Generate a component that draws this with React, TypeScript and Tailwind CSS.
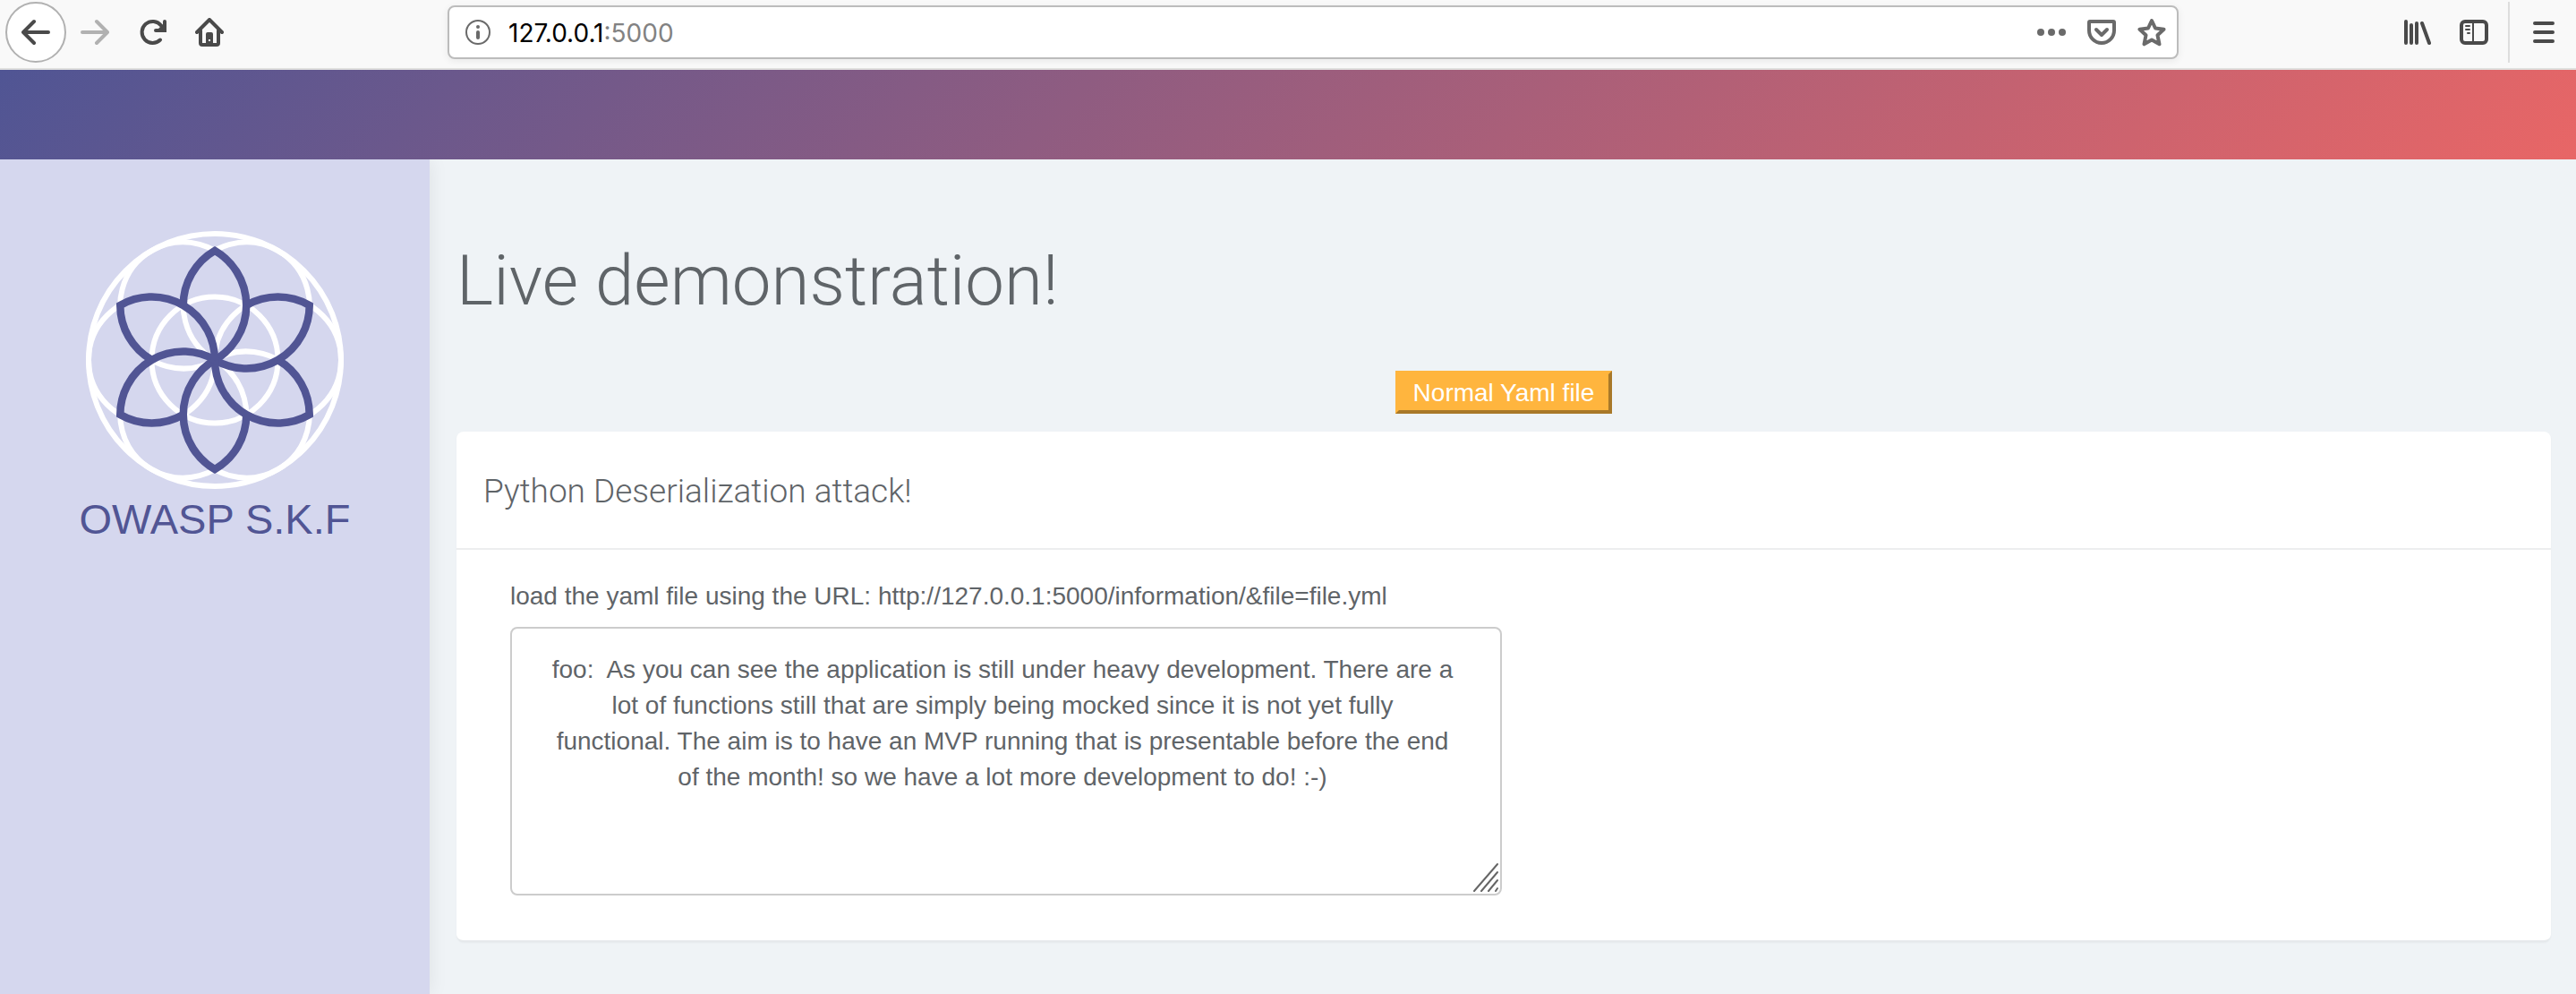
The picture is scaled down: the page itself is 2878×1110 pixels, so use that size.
import React from "react";

const PETAL_ANGLES = [0, 60, 120, 180, 240, 300];

const YAML_TEXT = [
  "foo:  As you can see the application is still under heavy development. There are a lot of functions still that are simply being mocked since it is not yet fully",
  "functional. The aim is to have an MVP running that is presentable before the end",
  "of the month! so we have a lot more development to do! :-)",
].join("\n");

function Icon({ children, className = "" }: { children: React.ReactNode; className?: string }) {
  return (
    <svg
      viewBox="0 0 32 32"
      className={`block size-8 shrink-0 ${className}`}
      fill="none"
      stroke="currentColor"
      strokeWidth="4"
      strokeLinecap="round"
      strokeLinejoin="round"
      aria-hidden="true"
    >
      {children}
    </svg>
  );
}

function BrowserBar() {
  return (
    <div className="flex h-[78px] items-start border-b-2 border-[#e0e0de] bg-[#f9f9f9] pt-[2px] pr-5 pl-[6px] text-[#4a4a4a]">
      <div className="flex h-[68px] items-center">
        <button aria-label="Back" className="flex size-[68px] items-center justify-center rounded-full border-2 border-[#b1b1b1] bg-white">
          <Icon>
            <path d="M30 16H3M14 4L2 16l12 12" />
          </Icon>
        </button>
        <button aria-label="Forward" className="ml-4 text-[#b1b1b1]">
          <Icon>
            <path d="M2 16h27M18 4l12 12-12 12" />
          </Icon>
        </button>
        <button aria-label="Reload" className="ml-8">
          <Icon>
            <path d="M25 24.500a12 12 0 1 1 1-16" />
            <path d="M30 4v10h-10" strokeLinejoin="miter" />
            <path d="M29 6v7h-7z" fill="currentColor" stroke="none" />
          </Icon>
        </button>
        <button aria-label="Home" className="ml-8">
          <Icon>
            <path d="M2 16L16 2l14 14" />
            <path d="M6 14v14a2 2 0 0 0 2 2h16a2 2 0 0 0 2-2V14" />
            <path d="M12 30V18a2 2 0 0 1 2-2h4a2 2 0 0 1 2 2v12h-3v-6h-2v6z" fill="currentColor" stroke="none" />
            <path d="M13 28h6" strokeWidth="4" strokeLinecap="butt" />
          </Icon>
        </button>
      </div>

      <div className="mt-1 ml-[250px] flex h-[60px] grow items-center rounded-lg border-2 border-[#bcbcbc] bg-white pr-3 pl-4 text-[#6a6a6a] shadow-[0_2px_8px_rgba(0,0,0,0.07)]">
        <button aria-label="Site information">
          <Icon>
            <circle cx="16" cy="16" r="13" strokeWidth="2" />
            <circle cx="16" cy="10" r="2" fill="currentColor" stroke="none" />
            <path d="M16 16v6" />
          </Icon>
        </button>
        <div className="ml-[18px] grow pt-[2px] font-['Inter',sans-serif] text-[28px] leading-8 text-[#828282]">
          <span className="text-black">127.0.0.1</span>:5000
        </div>
        <div className="flex gap-6">
          <button aria-label="Page actions">
            <Icon>
              <g fill="currentColor" stroke="none">
                <circle cx="4" cy="16" r="4" />
                <circle cx="16" cy="16" r="4" />
                <circle cx="28" cy="16" r="4" />
              </g>
            </Icon>
          </button>
          <button aria-label="Save to Pocket">
            <Icon>
              <path d="M3 4h26a1 1 0 0 1 1 1v9a14 14 0 0 1-28 0V5a1 1 0 0 1 1-1z" />
              <path d="M10 13l6 6 6-6" />
            </Icon>
          </button>
          <button aria-label="Bookmark this page">
            <Icon>
              <path d="M16 3l4 8.500 9.500 1.200-7 6.600 2 10L16 24.500 7.500 29.300l2-10-7-6.600L12 11.500z" />
            </Icon>
          </button>
        </div>
      </div>

      <div className="ml-[250px] flex h-[68px] items-center">
        <button aria-label="Library">
          <Icon>
            <path d="M4 4v24M10 8v20M16 6v22M22 6l8 22" />
          </Icon>
        </button>
        <button aria-label="Sidebars" className="ml-8">
          <Icon>
            <rect x="2" y="4" width="28" height="24" rx="4" />
            <path d="M15 4v24M7 9h4M7 13h4M9 17h2" strokeWidth="2" />
          </Icon>
        </button>
        <div className="ml-[22px] h-full w-[2px] bg-[#dedede]" />
        <button aria-label="Open menu" className="ml-[22px]">
          <Icon>
            <path d="M6 6h20M6 16h20M6 26h20" />
          </Icon>
        </button>
      </div>
    </div>
  );
}

function FlowerLogo() {
  return (
    <svg viewBox="-144 -144 288 288" className="block size-72" fill="none" aria-hidden="true">
      <g stroke="#ffffff" strokeWidth="6">
        <circle r="141" />
        <circle r="70.500" />
        {PETAL_ANGLES.map((a) => (
          <circle key={a} cx="70.500" r="70.500" transform={`rotate(${a})`} />
        ))}
      </g>
      <g stroke="#515594" strokeWidth="8.500" strokeLinejoin="miter">
        {PETAL_ANGLES.map((a) => (
          <path
            key={a}
            d="M-35.250 -61.050A70.500 70.500 0 0 1 0 -122.100A70.500 70.500 0 0 1 0 0"
            transform={`rotate(${a})`}
          />
        ))}
      </g>
    </svg>
  );
}

export default function App() {
  return (
    <div className="flex min-h-screen flex-col bg-[#eff3f6] font-['Liberation_Sans',Arial,sans-serif] text-[#5f6468]">
      <BrowserBar />
      <header className="h-[100px] bg-[linear-gradient(135deg,#505594_0%,#e86666_100%)]" />
      <div className="flex grow">
        <aside className="flex w-[480px] shrink-0 flex-col items-center bg-[#d5d7ee] pt-20 shadow-[0_0_20px_rgba(0,0,0,0.08)] [clip-path:inset(0_-30px_0_0)]">
          <FlowerLogo />
          <div className="mt-1 text-[47px] leading-[60px] text-[#515594]">OWASP S.K.F</div>
        </aside>

        <main className="min-w-0 grow pt-[92px] pr-7 pb-14 pl-[30px]">
          <h1 className="font-['Roboto',sans-serif] text-[78px] leading-[88px] font-light">Live demonstration!</h1>
          <div className="mt-14 flex justify-center">
            <button className="h-12 border-4 border-t-[#ffb53e] border-r-[#a87829] border-b-[#a87829] border-l-[#ffb53e] bg-[#ffb53e] px-4 pt-[2px] text-[28px] leading-[38px] text-white">
              Normal Yaml file
            </button>
          </div>

          <section className="mt-5 rounded-lg border-b-2 border-[#e6e9ec] bg-white shadow-[0_1px_2px_rgba(0,0,0,0.04)]">
            <h2 className="border-b-2 border-[#eceeef] px-[30px] pt-11 pb-10 font-['Roboto',sans-serif] text-[37px] leading-[46px] font-light">
              Python Deserialization attack!
            </h2>
            <div className="pt-8 pr-16 pb-[50px] pl-[60px] text-[28px] leading-10">
              <label htmlFor="yaml" className="block">
                load the yaml file using the URL: http://127.0.0.1:5000/information/&amp;file=file.yml
              </label>
              <div className="relative mt-[14px] w-1/2">
                <textarea
                  id="yaml"
                  defaultValue={YAML_TEXT}
                  className="block h-[300px] w-full resize-none rounded-lg border-2 border-[#cccccc] bg-white py-[26px] pr-10 pl-8 text-center"
                />
                <svg
                  viewBox="0 0 28 32"
                  className="absolute right-1 bottom-1 h-8 w-7"
                  fill="none"
                  stroke="#666666"
                  strokeWidth="2"
                  strokeLinecap="round"
                  aria-hidden="true"
                >
                  <path d="M1 31L27 1M9 31L27 10M17 31L27 19M25 31L27 28" />
                </svg>
              </div>
            </div>
          </section>
        </main>
      </div>
    </div>
  );
}
